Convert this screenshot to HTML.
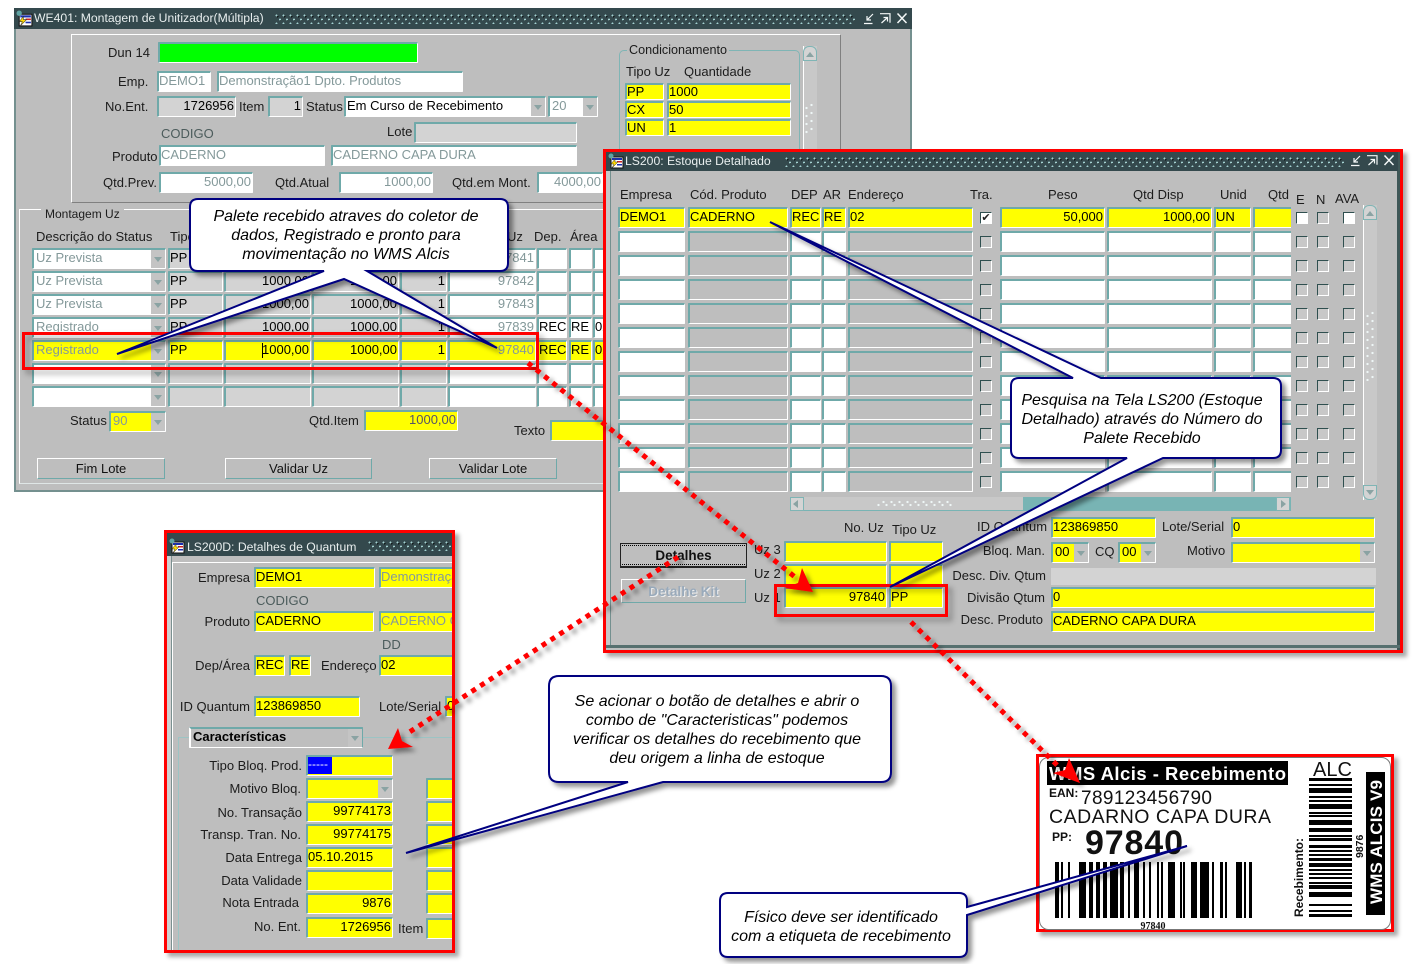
<!DOCTYPE html>
<html lang="pt"><head><meta charset="utf-8"><title>WMS Alcis</title>
<style>
html,body{margin:0;padding:0;background:#fff}
#p{position:relative;width:1414px;height:964px;overflow:hidden;font:13px/14px "Liberation Sans",sans-serif;color:#1c1c1c;background:#fff}
.w,.l,.f,.b,.k,.fr,.tb,.ly{position:absolute}
.ly{left:0;top:0;width:1414px;height:964px}
.w{box-sizing:border-box;background:#bebebe}
.tb{background-color:#34494d;color:#e8eeee;white-space:nowrap;font-size:12.2px}
.tb span{position:absolute;top:3px;line-height:14px}
.dots{position:absolute;top:5px;height:11px;background-image:radial-gradient(circle at 2.5px 2.5px,#a5d2d2 .9px,transparent 1.1px),radial-gradient(circle at 3.5px 3.5px,#0c1414 .8px,transparent 1px),radial-gradient(circle at 6px 6.5px,#a5d2d2 .9px,transparent 1.1px),radial-gradient(circle at 7px 7.5px,#0c1414 .8px,transparent 1px);background-size:7px 8px}
.sd{position:absolute;background-image:radial-gradient(circle at 1.5px 5px,#eef6f6 1px,transparent 1.3px),radial-gradient(circle at 6.5px 2px,#eef6f6 1px,transparent 1.3px);background-size:8px 8px}
.l{white-space:nowrap}
.f{box-sizing:border-box;border-style:solid;border-width:2px 1px 1px 2px;border-color:#6fa9a9 #fff #fff #6fa9a9;height:21px;line-height:16px;padding:0 1px 0 0;white-space:nowrap;overflow:hidden;background:#fff;color:#000;border-radius:1px}
.y{background:#ff0}.g{background:#d3d3d3}.s{background:#bebebe}
.n{color:#84999a}.r{text-align:right}
.d{position:absolute;right:0;top:0;bottom:0;width:14px;background:#c4c4c4}
.d:after{content:"";position:absolute;left:3px;top:7px;border:4px solid transparent;border-top:5px solid #8aa3a3;border-bottom:0}
.row{position:absolute;left:0;width:1414px;height:21px}
.row .f{top:0}
.a1{left:32px;width:134px}.a2{left:168px;width:55px}.a3{left:224px;width:87px}.a4{left:312px;width:87px}.a5{left:400px;width:47px}.a6{left:448px;width:88px}.a7{left:537px;width:30px}.a8{left:569px;width:23px}.a9{left:593px;width:30px}
.c1{left:618px;width:67px}.c2{left:688px;width:100px}.c3{left:790px;width:31px}.c4{left:822px;width:24px}.c5{left:848px;width:125px}.c6{left:1000px;width:105px}.c7{left:1107px;width:105px}.c8{left:1214px;width:37px}.c9{left:1253px;width:60px}
.k{box-sizing:border-box;width:12px;height:12px;top:5px;border:1px solid;border-color:#2f4f4f #fff #fff #2f4f4f;background:#c8c8c8;font:11px/10px "DejaVu Sans",sans-serif;text-align:center;color:#222}
.k.on{background:#fff}
.b{box-sizing:border-box;border:1px solid;border-color:#fff #6fa9a9 #6fa9a9 #fff;text-align:center;line-height:19px;height:21px;color:#111}
.fr{box-sizing:border-box;border:1px solid #fff}
</style></head><body><div id="p">

<svg width="0" height="0" style="position:absolute"><defs>
<symbol id="ic" viewBox="0 0 16 16"><rect x="3" y="4" width="12" height="11" fill="#fff" stroke="#111"/><rect x="4" y="5" width="10" height="2" fill="#1a2fb0"/><rect x="9" y="8" width="5" height="1.5" fill="#c22"/><rect x="9" y="11" width="5" height="1.5" fill="#1a2fb0"/><path d="M7 6 3 11h3l-2 4 6-6H7z" fill="#ffd800" stroke="#333" stroke-width=".5"/><circle cx="3" cy="3" r="2.5" fill="#5fa3a3"/></symbol>
<symbol id="ct" viewBox="0 0 44 12"><g fill="none" stroke="#f4f8f8" stroke-width="1.2"><path d="M0 10.5h8.500M9 1 3 7M3 3v4h4"/><path d="M16 .7h10v9M17.500 10l6-5.500M19.500 4.500h4v4"/><path d="M33.500 .5l9 9.500M42.500 .5l-9 9.500" stroke-width="1.500"/></g></symbol>
</defs></svg>

<!-- WE401 -->
<div class="ly" style="clip-path:inset(0 502px 472px 14px)">
<div class="w" style="left:14px;top:8px;width:898px;height:484px;border:2px solid #74908f"></div>
<div class="tb" style="left:14px;top:8px;width:898px;height:21px"><span style="left:20px">WE401: Montagem de Unitizador(Múltipla)</span><div class="dots" style="left:260px;width:582px"></div></div>
<svg class="l" style="left:16px;top:10px" width="17" height="17"><use href="#ic" width="17" height="17"/></svg>
<svg class="l" style="left:864px;top:13px" width="44" height="12"><use href="#ct" width="44" height="12"/></svg>
<div class="fr" style="left:71px;top:34px;width:770px;height:169px;border-color:#fff #808080 #808080 #fff"></div>

<div class="l" style="left:108px;top:46px">Dun 14</div>
<div class="f" style="left:158px;top:42px;width:260px;background:#0f0"></div>
<div class="l" style="left:118px;top:75px">Emp.</div>
<div class="f n" style="left:157px;top:71px;width:54px">DEMO1</div>
<div class="f n" style="left:217px;top:71px;width:246px">Demonstração1 Dpto. Produtos</div>
<div class="l" style="left:105px;top:100px">No.Ent.</div>
<div class="f g r" style="left:157px;top:96px;width:79px">1726956</div>
<div class="l" style="left:239px;top:100px">Item</div>
<div class="f g r" style="left:268px;top:96px;width:35px">1</div>
<div class="l" style="left:306px;top:100px">Status</div>
<div class="f" style="left:344px;top:96px;width:202px;padding-left:1px">Em Curso de Recebimento<i class="d"></i></div>
<div class="f n" style="left:548px;top:96px;width:50px;padding-left:2px">20<i class="d"></i></div>
<div class="l" style="left:161px;top:127px;color:#4c5c5c">CODIGO</div>
<div class="l" style="left:387px;top:125px">Lote</div>
<div class="f g" style="left:414px;top:122px;width:163px"></div>
<div class="l" style="left:112px;top:150px">Produto</div>
<div class="f n" style="left:159px;top:145px;width:166px">CADERNO</div>
<div class="f n" style="left:331px;top:145px;width:246px">CADERNO CAPA DURA</div>
<div class="l" style="left:103px;top:176px">Qtd.Prev.</div>
<div class="f n r" style="left:159px;top:172px;width:94px">5000,00</div>
<div class="l" style="left:275px;top:176px">Qtd.Atual</div>
<div class="f n r" style="left:339px;top:172px;width:94px">1000,00</div>
<div class="l" style="left:452px;top:176px">Qtd.em Mont.</div>
<div class="f n r" style="left:537px;top:172px;width:66px">4000,00</div>

<div class="fr" style="left:619px;top:50px;width:181px;height:110px;border-color:#7fb5b5;border-radius:5px"></div>
<div class="l" style="left:627px;top:43px;background:#bebebe;padding:0 2px;font-size:12.6px">Condicionamento</div>
<div class="l" style="left:626px;top:65px">Tipo Uz</div><div class="l" style="left:684px;top:65px">Quantidade</div>
<div class="f y" style="left:625px;top:83px;width:39px;height:17px;line-height:14px">PP</div><div class="f y" style="left:667px;top:83px;width:124px;height:17px;line-height:14px">1000</div>
<div class="f y" style="left:625px;top:101px;width:39px;height:17px;line-height:14px">CX</div><div class="f y" style="left:667px;top:101px;width:124px;height:17px;line-height:14px">50</div>
<div class="f y" style="left:625px;top:119px;width:39px;height:17px;line-height:14px">UN</div><div class="f y" style="left:667px;top:119px;width:124px;height:17px;line-height:14px">1</div>
<div class="l" style="left:803px;top:46px;width:14px;height:120px;background:#c8c8c8;box-sizing:border-box;border-left:1px solid #fff"></div>
<div class="sd" style="left:805px;top:103px;width:8px;height:32px"></div>
<div class="l" style="left:803px;top:46px;box-sizing:border-box;width:14px;height:15px;background:#d4d4d4;border:1px solid #7fb5b5;border-radius:6px 6px 0 0"></div>
<div class="l" style="left:806px;top:52px;border:4px solid transparent;border-bottom:5px solid #8aa3a3;border-top:0"></div>

<div class="fr" style="left:19px;top:209px;width:880px;height:275px;border-color:#fff #fff #dfe6e6 #fff"></div>
<div class="l" style="left:41px;top:207px;background:#bebebe;padding:0 4px;font-size:12px">Montagem Uz</div>
<div class="l" style="left:36px;top:230px">Descrição do Status</div><div class="l" style="left:170px;top:230px">Tipo</div><div class="l" style="left:507px;top:230px">Uz</div><div class="l" style="left:534px;top:230px">Dep.</div><div class="l" style="left:570px;top:230px">Área</div>

<div class="row" style="top:248px"><div class="f a1 n" style="padding-left:2px">Uz Prevista<i class="d"></i></div><div class="f a2 g">PP</div><div class="f a3 g r">1000,00</div><div class="f a4 g r">1000,00</div><div class="f a5 g r">1</div><div class="f a6 n r">97841</div><div class="f a7"></div><div class="f a8"></div><div class="f a9"></div></div>
<div class="row" style="top:271px"><div class="f a1 n" style="padding-left:2px">Uz Prevista<i class="d"></i></div><div class="f a2 g">PP</div><div class="f a3 g r">1000,00</div><div class="f a4 g r">1000,00</div><div class="f a5 g r">1</div><div class="f a6 n r">97842</div><div class="f a7"></div><div class="f a8"></div><div class="f a9"></div></div>
<div class="row" style="top:294px"><div class="f a1 n" style="padding-left:2px">Uz Prevista<i class="d"></i></div><div class="f a2 g">PP</div><div class="f a3 g r">1000,00</div><div class="f a4 g r">1000,00</div><div class="f a5 g r">1</div><div class="f a6 n r">97843</div><div class="f a7"></div><div class="f a8"></div><div class="f a9"></div></div>
<div class="row" style="top:317px"><div class="f a1 n" style="padding-left:2px">Registrado<i class="d"></i></div><div class="f a2 g">PP</div><div class="f a3 g r">1000,00</div><div class="f a4 g r">1000,00</div><div class="f a5 g r">1</div><div class="f a6 n r">97839</div><div class="f a7">REC</div><div class="f a8">RE</div><div class="f a9">02</div></div>
<div class="row" style="top:340px"><div class="f a1 y n" style="padding-left:2px">Registrado<i class="d"></i></div><div class="f a2 y">PP</div><div class="f a3 y r">1000,00</div><div class="f a4 y r">1000,00</div><div class="f a5 y r">1</div><div class="f a6 y n r">97840</div><div class="f a7 y">REC</div><div class="f a8 y">RE</div><div class="f a9 y">02</div></div>
<div class="l" style="left:262px;top:343px;width:1px;height:15px;background:#000"></div>
<div class="row" style="top:363px"><div class="f a1"><i class="d"></i></div><div class="f a2 g"></div><div class="f a3 g"></div><div class="f a4 g"></div><div class="f a5 g"></div><div class="f a6"></div><div class="f a7"></div><div class="f a8"></div><div class="f a9"></div></div>
<div class="row" style="top:386px"><div class="f a1"><i class="d"></i></div><div class="f a2 g"></div><div class="f a3 g"></div><div class="f a4 g"></div><div class="f a5 g"></div><div class="f a6"></div><div class="f a7"></div><div class="f a8"></div><div class="f a9"></div></div>

<div class="l" style="left:70px;top:414px">Status</div>
<div class="f y n" style="left:109px;top:411px;width:57px;padding-left:2px">90<i class="d"></i></div>
<div class="l" style="left:309px;top:414px">Qtd.Item</div>
<div class="f y n r" style="left:364px;top:410px;width:94px;color:#556">1000,00</div>
<div class="l" style="left:514px;top:424px">Texto</div>
<div class="f y" style="left:550px;top:420px;width:120px"></div>
<div class="b" style="left:37px;top:458px;width:128px">Fim Lote</div>
<div class="b" style="left:225px;top:458px;width:147px">Validar Uz</div>
<div class="b" style="left:429px;top:458px;width:128px">Validar Lote</div>
</div>

<!-- LS200 -->
<div class="w" style="left:603px;top:149px;width:800px;height:504px;border:3px solid #f00;box-shadow:4px 4px 4px #aaa"></div>
<div class="l" style="left:1397px;top:152px;width:3px;height:498px;background:#3f5757"></div>
<div class="tb" style="left:606px;top:152px;width:792px;height:19px"><span style="left:19px;top:2px">LS200: Estoque Detalhado</span><div class="dots" style="left:178px;width:561px;top:4px"></div></div>
<svg class="l" style="left:608px;top:153px" width="16" height="16"><use href="#ic" width="16" height="16"/></svg>
<svg class="l" style="left:1351px;top:155px" width="44" height="12"><use href="#ct" width="44" height="12"/></svg>
<div class="l" style="left:606px;top:171px;width:4px;height:474px;background:#c8c8c8;border-right:1px solid #74908f"></div>
<div class="l" style="left:606px;top:645px;width:794px;height:3px;background:#56706f"></div>

<div class="l" style="left:620px;top:188px">Empresa</div><div class="l" style="left:690px;top:188px">Cód. Produto</div><div class="l" style="left:791px;top:188px">DEP</div><div class="l" style="left:823px;top:188px">AR</div><div class="l" style="left:848px;top:188px">Endereço</div><div class="l" style="left:970px;top:188px">Tra.</div><div class="l" style="left:1048px;top:188px">Peso</div><div class="l" style="left:1133px;top:188px">Qtd Disp</div><div class="l" style="left:1220px;top:188px">Unid</div><div class="l" style="left:1268px;top:188px">Qtd</div><div class="l" style="left:1296px;top:193px">E</div><div class="l" style="left:1316px;top:193px">N</div><div class="l" style="left:1335px;top:192px">AVA</div>

<div class="l" style="left:0;top:0;width:1291px;height:520px;overflow:hidden">
<div class="row" style="top:207px"><div class="f c1 y">DEMO1</div><div class="f c2 y">CADERNO</div><div class="f c3 y">REC</div><div class="f c4 y">RE</div><div class="f c5 y">02</div><div class="k on" style="left:980px">✔</div><div class="f c6 y r">50,000</div><div class="f c7 y r">1000,00</div><div class="f c8 y">UN</div><div class="f c9 y"></div></div>
<div class="row" style="top:231px"><div class="f c1"></div><div class="f c2 s"></div><div class="f c3"></div><div class="f c4"></div><div class="f c5 s"></div><div class="k" style="left:980px"></div><div class="f c6"></div><div class="f c7"></div><div class="f c8"></div><div class="f c9"></div></div>
<div class="row" style="top:255px"><div class="f c1"></div><div class="f c2 s"></div><div class="f c3"></div><div class="f c4"></div><div class="f c5 s"></div><div class="k" style="left:980px"></div><div class="f c6"></div><div class="f c7"></div><div class="f c8"></div><div class="f c9"></div></div>
<div class="row" style="top:279px"><div class="f c1"></div><div class="f c2 s"></div><div class="f c3"></div><div class="f c4"></div><div class="f c5 s"></div><div class="k" style="left:980px"></div><div class="f c6"></div><div class="f c7"></div><div class="f c8"></div><div class="f c9"></div></div>
<div class="row" style="top:303px"><div class="f c1"></div><div class="f c2 s"></div><div class="f c3"></div><div class="f c4"></div><div class="f c5 s"></div><div class="k" style="left:980px"></div><div class="f c6"></div><div class="f c7"></div><div class="f c8"></div><div class="f c9"></div></div>
<div class="row" style="top:327px"><div class="f c1"></div><div class="f c2 s"></div><div class="f c3"></div><div class="f c4"></div><div class="f c5 s"></div><div class="k" style="left:980px"></div><div class="f c6"></div><div class="f c7"></div><div class="f c8"></div><div class="f c9"></div></div>
<div class="row" style="top:351px"><div class="f c1"></div><div class="f c2 s"></div><div class="f c3"></div><div class="f c4"></div><div class="f c5 s"></div><div class="k" style="left:980px"></div><div class="f c6"></div><div class="f c7"></div><div class="f c8"></div><div class="f c9"></div></div>
<div class="row" style="top:375px"><div class="f c1"></div><div class="f c2 s"></div><div class="f c3"></div><div class="f c4"></div><div class="f c5 s"></div><div class="k" style="left:980px"></div><div class="f c6"></div><div class="f c7"></div><div class="f c8"></div><div class="f c9"></div></div>
<div class="row" style="top:399px"><div class="f c1"></div><div class="f c2 s"></div><div class="f c3"></div><div class="f c4"></div><div class="f c5 s"></div><div class="k" style="left:980px"></div><div class="f c6"></div><div class="f c7"></div><div class="f c8"></div><div class="f c9"></div></div>
<div class="row" style="top:423px"><div class="f c1"></div><div class="f c2 s"></div><div class="f c3"></div><div class="f c4"></div><div class="f c5 s"></div><div class="k" style="left:980px"></div><div class="f c6"></div><div class="f c7"></div><div class="f c8"></div><div class="f c9"></div></div>
<div class="row" style="top:447px"><div class="f c1"></div><div class="f c2 s"></div><div class="f c3"></div><div class="f c4"></div><div class="f c5 s"></div><div class="k" style="left:980px"></div><div class="f c6"></div><div class="f c7"></div><div class="f c8"></div><div class="f c9"></div></div>
<div class="row" style="top:471px"><div class="f c1"></div><div class="f c2 s"></div><div class="f c3"></div><div class="f c4"></div><div class="f c5 s"></div><div class="k" style="left:980px"></div><div class="f c6"></div><div class="f c7"></div><div class="f c8"></div><div class="f c9"></div></div>
</div>

<div class="row" style="top:207px"><div class="k on" style="left:1296px"></div><div class="k" style="left:1317px"></div><div class="k on" style="left:1343px"></div></div>
<div class="row" style="top:231px"><div class="k" style="left:1296px"></div><div class="k" style="left:1317px"></div><div class="k" style="left:1343px"></div></div>
<div class="row" style="top:255px"><div class="k" style="left:1296px"></div><div class="k" style="left:1317px"></div><div class="k" style="left:1343px"></div></div>
<div class="row" style="top:279px"><div class="k" style="left:1296px"></div><div class="k" style="left:1317px"></div><div class="k" style="left:1343px"></div></div>
<div class="row" style="top:303px"><div class="k" style="left:1296px"></div><div class="k" style="left:1317px"></div><div class="k" style="left:1343px"></div></div>
<div class="row" style="top:327px"><div class="k" style="left:1296px"></div><div class="k" style="left:1317px"></div><div class="k" style="left:1343px"></div></div>
<div class="row" style="top:351px"><div class="k" style="left:1296px"></div><div class="k" style="left:1317px"></div><div class="k" style="left:1343px"></div></div>
<div class="row" style="top:375px"><div class="k" style="left:1296px"></div><div class="k" style="left:1317px"></div><div class="k" style="left:1343px"></div></div>
<div class="row" style="top:399px"><div class="k" style="left:1296px"></div><div class="k" style="left:1317px"></div><div class="k" style="left:1343px"></div></div>
<div class="row" style="top:423px"><div class="k" style="left:1296px"></div><div class="k" style="left:1317px"></div><div class="k" style="left:1343px"></div></div>
<div class="row" style="top:447px"><div class="k" style="left:1296px"></div><div class="k" style="left:1317px"></div><div class="k" style="left:1343px"></div></div>
<div class="row" style="top:471px"><div class="k" style="left:1296px"></div><div class="k" style="left:1317px"></div><div class="k" style="left:1343px"></div></div>

<!-- scrollbars -->
<div class="l" style="left:1363px;top:205px;width:14px;height:295px;background:#c8c8c8;box-sizing:border-box;border-left:1px solid #fff"></div>
<div class="l" style="left:1363px;top:205px;box-sizing:border-box;width:14px;height:15px;background:#d4d4d4;border:1px solid #7fb5b5;border-radius:6px 6px 0 0"></div>
<div class="l" style="left:1366px;top:211px;border:4px solid transparent;border-bottom:5px solid #8aa3a3;border-top:0"></div>
<div class="l" style="left:1363px;top:485px;box-sizing:border-box;width:14px;height:15px;background:#d4d4d4;border:1px solid #7fb5b5;border-radius:0 0 6px 6px"></div>
<div class="l" style="left:1366px;top:490px;border:4px solid transparent;border-top:5px solid #8aa3a3;border-bottom:0"></div>
<div class="sd" style="left:1366px;top:311px;width:8px;height:70px"></div>
<div class="l" style="left:790px;top:497px;width:501px;height:14px;background:#78b4b4"></div>
<div class="l" style="left:790px;top:497px;width:233px;height:14px;background:#c8c8c8;border-bottom:1px solid #78b4b4;box-sizing:border-box"></div>
<div class="l" style="left:790px;top:497px;width:14px;height:14px;background:#d4d4d4;box-sizing:border-box;border:1px solid #7fb5b5"></div>
<div class="l" style="left:1276px;top:497px;width:14px;height:14px;background:#d4d4d4;box-sizing:border-box;border:1px solid #7fb5b5"></div>
<div class="l" style="left:793px;top:500px;border:4px solid transparent;border-right:5px solid #8aa3a3;border-left:0"></div>
<div class="l" style="left:1281px;top:500px;border:4px solid transparent;border-left:5px solid #8aa3a3;border-right:0"></div>
<div class="sd" style="left:877px;top:500px;width:76px;height:8px"></div>

<!-- LS200 lower -->
<div class="b" style="left:620px;top:543px;width:127px;height:25px;border:1px solid #222;border-bottom-width:2px;font-weight:bold;line-height:23px;font-size:13.5px"><span class="l" style="left:1px;right:1px;top:1px;bottom:1px;border:1px dotted #000;border-width:1px 0"></span>Detalhes</div>
<div class="b" style="left:621px;top:579px;width:125px;height:24px;font-weight:bold;line-height:23px;font-size:13.5px;color:#9ab;text-shadow:1px 1px 0 #eee">Detalhe Kit</div>
<div class="l" style="left:844px;top:521px">No. Uz</div><div class="l" style="left:892px;top:523px">Tipo Uz</div>
<div class="l" style="left:754px;top:543px">Uz 3</div><div class="l" style="left:754px;top:567px">Uz 2</div><div class="l" style="left:754px;top:591px">Uz 1</div>
<div class="f y" style="left:784px;top:541px;width:103px"></div><div class="f y" style="left:889px;top:541px;width:54px"></div>
<div class="f y" style="left:784px;top:564px;width:103px"></div><div class="f y" style="left:889px;top:564px;width:54px"></div>
<div class="f y r" style="left:784px;top:587px;width:103px">97840</div><div class="f y" style="left:889px;top:587px;width:54px">PP</div>
<div class="l" style="left:977px;top:520px">ID Quantum</div><div class="f y" style="left:1051px;top:517px;width:105px">123869850</div>
<div class="l" style="left:1162px;top:520px">Lote/Serial</div><div class="f y" style="left:1231px;top:517px;width:144px">0</div>
<div class="l" style="right:369px;top:544px">Bloq. Man.</div><div class="f y" style="left:1051px;top:542px;width:38px;padding-left:2px">00<i class="d"></i></div>
<div class="l" style="left:1095px;top:545px">CQ</div><div class="f y" style="left:1118px;top:542px;width:38px;padding-left:2px">00<i class="d"></i></div>
<div class="l" style="left:1187px;top:544px">Motivo</div><div class="f y" style="left:1231px;top:542px;width:144px"><i class="d"></i></div>
<div class="l" style="right:368px;top:569px">Desc. Div. Qtum</div><div class="l" style="left:1051px;top:568px;width:325px;height:17px;background:#d3d3d3"></div>
<div class="l" style="right:369px;top:591px">Divisão Qtum</div><div class="f y" style="left:1051px;top:587px;width:324px">0</div>
<div class="l" style="right:371px;top:613px">Desc. Produto</div><div class="f y" style="left:1051px;top:611px;width:324px">CADERNO CAPA DURA</div>

<!-- LS200D -->
<div class="w" style="left:164px;top:530px;width:291px;height:423px;border:3px solid #f00;box-shadow:4px 4px 4px #aaa"></div>
<div class="l" style="left:167px;top:533px;width:285px;height:417px;overflow:hidden;background:#bebebe">
<div style="position:absolute;left:-167px;top:-533px;width:1414px;height:964px">
<div class="tb" style="left:167px;top:533px;width:285px;height:23px"><span style="left:20px;top:7px">LS200D: Detalhes de Quantum</span><div class="dots" style="left:200px;width:90px;top:7px"></div></div>
<svg class="l" style="left:169px;top:538px" width="16" height="16"><use href="#ic" width="16" height="16"/></svg>
<div class="l" style="left:167px;top:556px;width:4px;height:394px;background:#d0d0d0;border-right:1px solid #7a9090"></div>
<div class="l" style="left:172px;top:562px;width:285px;height:1px;background:#fff"></div>
<div class="l" style="left:172px;top:562px;width:1px;height:390px;background:#fff"></div>
<div class="l" style="right:1164px;top:571px">Empresa</div><div class="f y" style="left:254px;top:567px;width:121px">DEMO1</div><div class="f y n" style="left:379px;top:567px;width:90px">Demonstraçã</div>
<div class="l" style="left:256px;top:594px;color:#4c5c5c">CODIGO</div>
<div class="l" style="right:1164px;top:615px">Produto</div><div class="f y" style="left:254px;top:611px;width:120px">CADERNO</div><div class="f y n" style="left:379px;top:611px;width:90px">CADERNO C</div>
<div class="l" style="left:382px;top:638px;color:#4c5c5c">DD</div>
<div class="l" style="right:1164px;top:659px">Dep/Área</div><div class="f y" style="left:254px;top:655px;width:31px">REC</div><div class="f y" style="left:289px;top:655px;width:22px">RE</div>
<div class="l" style="left:321px;top:659px">Endereço</div><div class="f y" style="left:379px;top:655px;width:90px">02</div>
<div class="l" style="right:1164px;top:700px">ID Quantum</div><div class="f y" style="left:254px;top:696px;width:106px">123869850</div>
<div class="l" style="left:379px;top:700px">Lote/Serial</div><div class="f y" style="left:445px;top:696px;width:30px">0</div>
<div class="fr" style="left:178px;top:737px;width:300px;height:230px;border-color:#9cc4c4"></div>
<div class="f" style="left:189px;top:727px;width:174px;background:#bebebe;font-weight:bold;border-color:#6fa9a9 #6fa9a9 #fff #fff;padding-left:2px">Características<i class="d"></i></div>
<div class="l" style="right:1112px;top:759px">Tipo Bloq. Prod.</div><div class="f y" style="left:306px;top:755px;width:87px"></div><div class="l" style="left:308px;top:757px;width:24px;height:17px;background:#00f;color:#fff;line-height:15px;font-size:12px">-----</div>
<div class="l" style="right:1113px;top:782px">Motivo Bloq.</div><div class="f y" style="left:306px;top:778px;width:87px"><i class="d"></i></div>
<div class="l" style="right:1112px;top:806px">No. Transação</div><div class="f y r" style="left:306px;top:801px;width:87px">99774173</div>
<div class="l" style="right:1113px;top:828px">Transp. Tran. No.</div><div class="f y r" style="left:306px;top:824px;width:87px">99774175</div>
<div class="l" style="right:1112px;top:851px">Data Entrega</div><div class="f y" style="left:306px;top:847px;width:87px">05.10.2015</div>
<div class="l" style="right:1112px;top:874px">Data Validade</div><div class="f y" style="left:306px;top:870px;width:87px"></div>
<div class="l" style="right:1115px;top:896px">Nota Entrada</div><div class="f y r" style="left:306px;top:893px;width:87px">9876</div>
<div class="l" style="right:1113px;top:920px">No. Ent.</div><div class="f y r" style="left:306px;top:917px;width:87px">1726956</div>
<div class="l" style="left:398px;top:922px">Item</div>
<div class="f y" style="left:426px;top:778px;width:40px"></div><div class="f y" style="left:426px;top:801px;width:40px"></div><div class="f y" style="left:426px;top:824px;width:40px"></div><div class="f y" style="left:426px;top:847px;width:40px"></div><div class="f y" style="left:426px;top:870px;width:40px"></div><div class="f y" style="left:426px;top:893px;width:40px"></div><div class="f y" style="left:426px;top:918px;width:40px"></div>
</div></div>

<!-- Label -->
<div class="w" style="left:1036px;top:754px;width:358px;height:178px;border:3px solid #f00;background:#fff;box-shadow:4px 4px 4px #aaa"></div>
<svg class="ly" width="1414" height="964" viewBox="0 0 1414 964" font-family="Liberation Sans, sans-serif">
<rect x="1039.500" y="757.500" width="351" height="172" rx="9" fill="#fff" stroke="#777"/>
<rect x="1047" y="761" width="241" height="24" fill="#000"/>
<text x="1049" y="780" font-size="18.5" font-weight="bold" fill="#fff" textLength="237" lengthAdjust="spacing">WMS Alcis - Recebimento</text>
<text x="1049" y="797" font-size="12" font-weight="bold" fill="#111">EAN:</text>
<text x="1081" y="804" font-size="19" fill="#111" textLength="131" lengthAdjust="spacing">789123456790</text>
<text x="1049" y="823" font-size="19.500" fill="#111" textLength="222" lengthAdjust="spacing">CADARNO CAPA DURA</text>
<text x="1052" y="841" font-size="12" font-weight="bold" fill="#111">PP:</text>
<text x="1085" y="854" font-size="34" font-weight="bold" fill="#111" textLength="98" lengthAdjust="spacing">97840</text>
<g fill="#000"><rect x="1055" y="862" width="4" height="56"/><rect x="1061" y="862" width="2" height="56"/><rect x="1068" y="862" width="2" height="56"/><rect x="1079" y="862" width="7" height="56"/><rect x="1089" y="862" width="4" height="56"/><rect x="1096" y="862" width="4" height="56"/><rect x="1103" y="862" width="4" height="56"/><rect x="1110" y="862" width="8" height="56"/><rect x="1120" y="862" width="4" height="56"/><rect x="1128" y="862" width="2" height="56"/><rect x="1134" y="862" width="5" height="56"/><rect x="1143" y="862" width="2" height="56"/><rect x="1149" y="862" width="2" height="56"/><rect x="1157" y="862" width="2" height="56"/><rect x="1161" y="862" width="2" height="56"/><rect x="1168" y="862" width="7" height="56"/><rect x="1180" y="862" width="2" height="56"/><rect x="1183" y="862" width="2" height="56"/><rect x="1191" y="862" width="6" height="56"/><rect x="1200" y="862" width="9" height="56"/><rect x="1212" y="862" width="2" height="56"/><rect x="1220" y="862" width="3" height="56"/><rect x="1225" y="862" width="2" height="56"/><rect x="1236" y="862" width="6" height="56"/><rect x="1244" y="862" width="2" height="56"/><rect x="1249" y="862" width="3" height="56"/></g>
<text x="1153" y="929" font-size="10" font-weight="bold" text-anchor="middle" font-family="Liberation Serif, serif" fill="#111">97840</text>
<text x="1313" y="776" font-size="20" fill="#111" textLength="39">ALC</text>
<g fill="#000"><rect x="1309" y="778" width="43" height="3"/><rect x="1309" y="784" width="43" height="2"/><rect x="1309" y="788" width="43" height="5"/><rect x="1309" y="796" width="43" height="2"/><rect x="1309" y="800" width="43" height="2"/><rect x="1309" y="804" width="43" height="5"/><rect x="1309" y="812" width="43" height="2"/><rect x="1309" y="815" width="43" height="2"/><rect x="1309" y="820" width="43" height="5"/><rect x="1309" y="828" width="43" height="4"/><rect x="1309" y="835" width="43" height="2"/><rect x="1309" y="838" width="43" height="3"/><rect x="1309" y="845" width="43" height="3"/><rect x="1309" y="850" width="43" height="2"/><rect x="1309" y="854" width="43" height="2"/><rect x="1309" y="858" width="43" height="3"/><rect x="1309" y="863" width="43" height="4"/><rect x="1309" y="869" width="43" height="2"/><rect x="1309" y="873" width="43" height="2"/><rect x="1309" y="877" width="43" height="2"/><rect x="1309" y="882" width="43" height="2"/><rect x="1309" y="885" width="43" height="4"/><rect x="1309" y="892" width="43" height="5"/><rect x="1309" y="904" width="43" height="2"/><rect x="1309" y="910" width="43" height="2"/><rect x="1309" y="914" width="43" height="3"/></g>
<text transform="translate(1303 917) rotate(-90)" font-size="12" font-weight="bold" fill="#111" textLength="79">Recebimento:</text>
<text transform="translate(1363 858) rotate(-90)" font-size="10.500" font-weight="bold" fill="#111">9876</text>
<rect x="1366" y="772" width="19" height="143" fill="#000"/>
<text transform="translate(1382 904) rotate(-90)" font-size="17" font-weight="bold" fill="#fff" textLength="124">WMS ALCIS V9</text>
</svg>

<!-- Overlay annotations -->
<svg class="ly" width="1414" height="964" viewBox="0 0 1414 964" font-family="Liberation Sans, sans-serif">
<defs><filter id="sh" x="-10%" y="-10%" width="125%" height="125%"><feDropShadow dx="4" dy="4" stdDeviation="2.5" flood-color="#000" flood-opacity=".42"/></filter></defs>
<g fill="none" stroke="#f00" style="filter:drop-shadow(4px 4px 3px rgba(0,0,0,.35))">
<rect x="23.500" y="333.500" width="514" height="35" stroke-width="3"/>
<rect x="775.500" y="585.500" width="171" height="30" stroke-width="3"/>
</g>
<g filter="url(#sh)">
<g fill="none" stroke="#f00" stroke-width="5" stroke-dasharray="5 5.500">
<path d="M528 363 795 577"/><path d="M678 557 408 733"/><path d="M911 622 1060 768"/>
</g>
<path d="M813 592 802 568 798 583 784 588z" fill="#f00"/>
<path d="M388 749 398 728 402 741 413 747z" fill="#f00"/>
<path d="M1080 783 1069 758 1065 770 1053 773z" fill="#f00"/>
</g>
<g fill="#fff" stroke="#000080" stroke-width="2" filter="url(#sh)">
<path d="M198 199H500Q508 199 508 207V263Q508 271 500 271H367L497 348 344 279 117 354 324 271H198Q190 271 190 263V207Q190 199 198 199Z"/>
<path d="M1019 378H1073L770 222 1101 378H1273Q1281 378 1281 386V450Q1281 458 1273 458H1163L890 587 1127 458H1019Q1011 458 1011 450V386Q1011 378 1019 378Z"/>
<path d="M559 676H881Q891 676 891 686V772Q891 782 881 782H663L406 853 628 782H559Q549 782 549 772V686Q549 676 559 676Z"/>
<path d="M728 893H959Q967 893 967 901V907L1187 846 967 915V949Q967 957 959 957H728Q720 957 720 949V901Q720 893 728 893Z"/>
</g>
<g font-size="16" font-style="italic" text-anchor="middle" fill="#000">
<text x="346" y="221">Palete recebido atraves do coletor de</text>
<text x="346" y="240">dados, Registrado e pronto para</text>
<text x="346" y="259">movimentação no WMS Alcis</text>
<text x="1142" y="405">Pesquisa na Tela LS200 (Estoque</text>
<text x="1142" y="424">Detalhado) através do Número do</text>
<text x="1142" y="443">Palete Recebido</text>
<text x="717" y="706">Se acionar o botão de detalhes e abrir o</text>
<text x="717" y="725">combo de "Caracteristicas" podemos</text>
<text x="717" y="744">verificar os detalhes do recebimento que</text>
<text x="717" y="763">deu origem a linha de estoque</text>
<text x="841" y="922">Físico deve ser identificado</text>
<text x="841" y="941">com a etiqueta de recebimento</text>
</g>
</svg>

</div></body></html>
